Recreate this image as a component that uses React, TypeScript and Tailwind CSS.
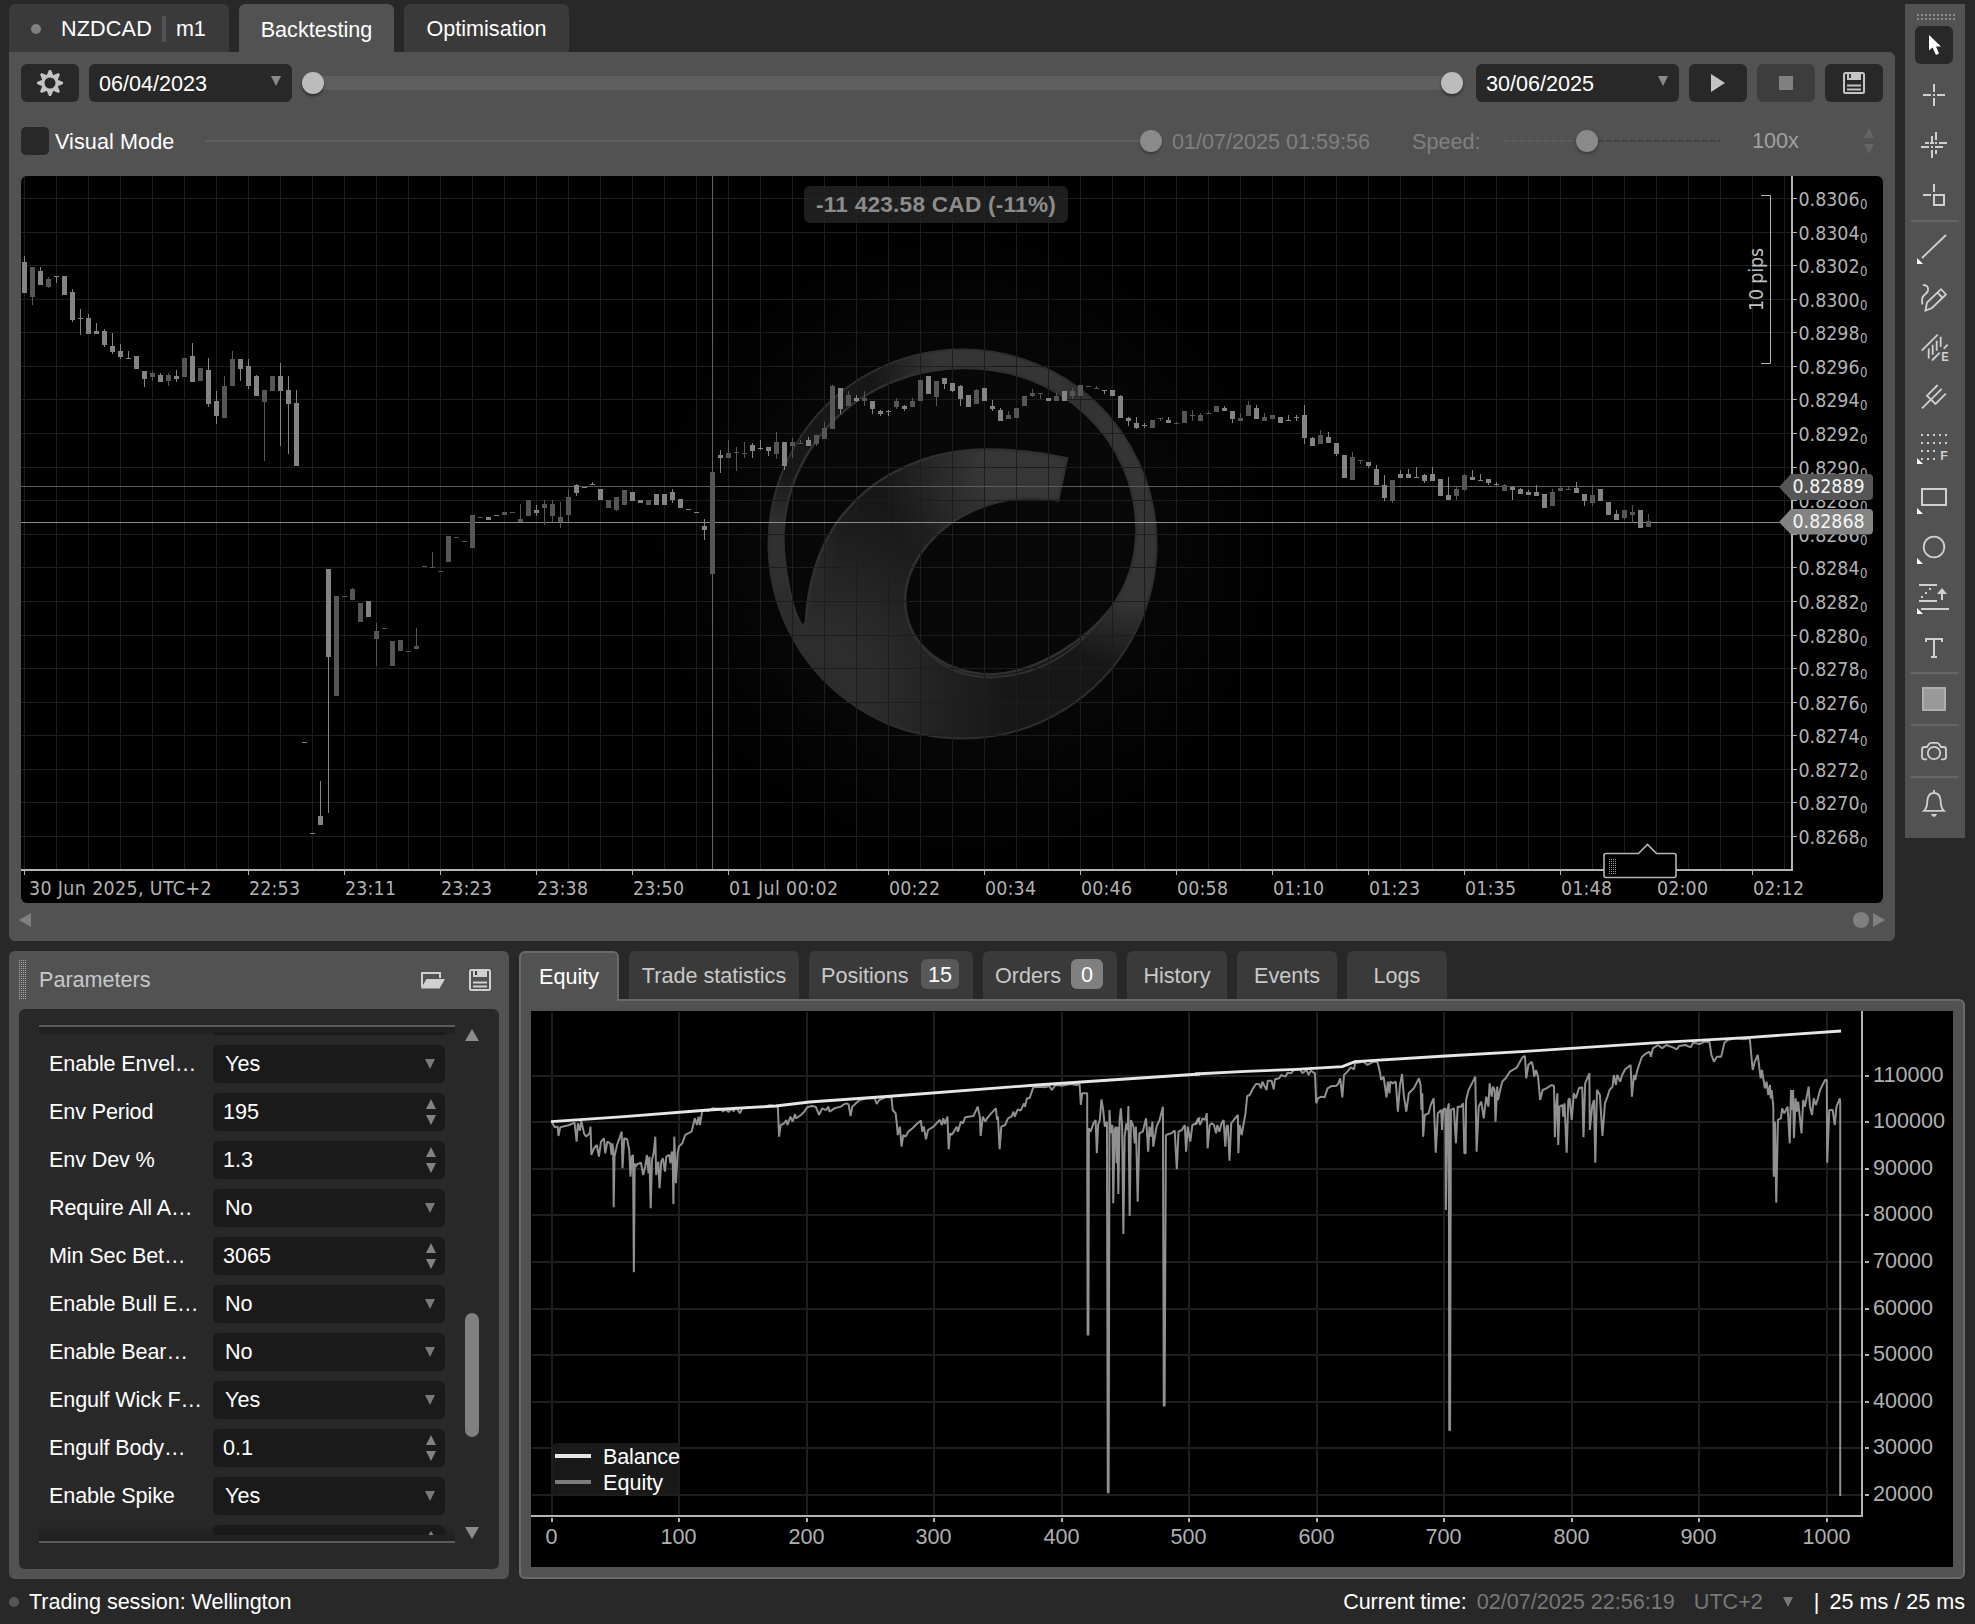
import React from "react";

/* Candles: [index, tone, high, low, bodyTop, bodyBottom]; tone 1 = falling (light), 0 = rising (dark) */
type Candle = [number, number, number, number, number, number];

const CANDLES: Candle[] = [
  [0, 1, 256, 293, 262, 293], [1, 0, 267, 305, 267, 297], [2, 1, 267, 285, 271, 285], [3, 0, 277, 288, 279, 287],
  [4, 1, 276, 283, 276, 277], [5, 1, 276, 295, 276, 295], [6, 1, 289, 322, 292, 320], [7, 1, 309, 335, 318, 319],
  [8, 1, 314, 334, 318, 334], [9, 1, 323, 334, 331, 334], [10, 1, 329, 347, 331, 345], [11, 1, 333, 354, 346, 352],
  [12, 1, 344, 359, 351, 357], [13, 1, 351, 359, 358, 359], [14, 1, 356, 369, 356, 369], [15, 1, 371, 387, 371, 379],
  [16, 0, 371, 381, 373, 377], [17, 1, 373, 382, 375, 382], [18, 0, 373, 386, 375, 381], [19, 1, 370, 382, 376, 379],
  [20, 0, 358, 377, 358, 377], [21, 1, 343, 382, 356, 382], [22, 0, 368, 381, 368, 381], [23, 1, 358, 407, 370, 404],
  [24, 1, 391, 424, 401, 416], [25, 0, 376, 418, 386, 418], [26, 0, 351, 386, 359, 386], [27, 1, 359, 381, 359, 369],
  [28, 1, 359, 389, 366, 386], [29, 1, 375, 396, 376, 396], [30, 0, 390, 461, 390, 402], [31, 0, 376, 391, 376, 391],
  [32, 1, 363, 446, 376, 391], [33, 1, 376, 454, 390, 404], [34, 1, 390, 466, 403, 466], [35, 1, 742, 743, 742, 743],
  [36, 1, 833, 834, 833, 834], [37, 1, 781, 825, 816, 825], [38, 1, 569, 813, 569, 657], [39, 0, 596, 696, 596, 696],
  [40, 0, 596, 597, 596, 597], [41, 0, 588, 600, 589, 600], [42, 0, 603, 622, 603, 622], [43, 1, 601, 617, 601, 617],
  [44, 0, 623, 666, 631, 639], [45, 0, 628, 629, 628, 629], [46, 0, 641, 666, 641, 666], [47, 0, 640, 651, 640, 651],
  [48, 0, 651, 652, 651, 652], [49, 0, 628, 649, 646, 649], [50, 0, 566, 567, 566, 567], [51, 0, 552, 568, 567, 568],
  [52, 0, 571, 572, 571, 572], [53, 0, 536, 562, 536, 562], [54, 0, 537, 538, 537, 538], [55, 0, 541, 542, 541, 542],
  [56, 0, 515, 548, 515, 548], [57, 0, 517, 518, 517, 518], [58, 1, 517, 520, 517, 520], [59, 1, 515, 516, 515, 516],
  [60, 0, 512, 515, 512, 515], [61, 0, 512, 513, 512, 513], [62, 0, 504, 522, 519, 522], [63, 0, 500, 516, 500, 516],
  [64, 1, 505, 516, 510, 513], [65, 0, 500, 525, 504, 508], [66, 0, 500, 522, 504, 516], [67, 0, 502, 528, 517, 522],
  [68, 0, 489, 522, 497, 515], [69, 1, 484, 496, 485, 493], [70, 1, 487, 488, 487, 488], [71, 1, 482, 485, 484, 485],
  [72, 1, 489, 500, 489, 500], [73, 0, 500, 508, 500, 508], [74, 0, 497, 511, 497, 510], [75, 0, 490, 505, 490, 505],
  [76, 1, 492, 501, 492, 501], [77, 1, 500, 503, 500, 503], [78, 0, 500, 505, 500, 505], [79, 1, 494, 505, 494, 505],
  [80, 1, 494, 505, 494, 505], [81, 1, 489, 503, 492, 500], [82, 1, 499, 508, 499, 508], [83, 1, 509, 510, 509, 510],
  [84, 1, 512, 513, 512, 513], [85, 1, 519, 540, 526, 530], [86, 0, 472, 574, 472, 574], [87, 1, 450, 473, 455, 458],
  [88, 0, 440, 458, 453, 458], [89, 0, 447, 471, 452, 453], [90, 0, 442, 458, 453, 454], [91, 1, 443, 458, 445, 451],
  [92, 1, 440, 450, 448, 449], [93, 1, 447, 456, 447, 451], [94, 0, 432, 459, 442, 454], [95, 1, 442, 470, 442, 466],
  [96, 0, 438, 458, 442, 446], [97, 0, 440, 444, 443, 444], [98, 1, 437, 446, 440, 446], [99, 0, 435, 446, 435, 444],
  [100, 0, 422, 439, 428, 439], [101, 0, 385, 429, 386, 429], [102, 1, 388, 414, 388, 409], [103, 0, 391, 406, 395, 406],
  [104, 1, 395, 402, 398, 401], [105, 0, 391, 406, 398, 401], [106, 1, 401, 414, 401, 409], [107, 1, 410, 416, 411, 414],
  [108, 1, 410, 416, 411, 412], [109, 0, 398, 409, 401, 407], [110, 1, 405, 411, 406, 409], [111, 0, 398, 407, 401, 407],
  [112, 0, 380, 401, 380, 401], [113, 1, 376, 394, 376, 394], [114, 0, 381, 406, 381, 397], [115, 1, 378, 389, 378, 384],
  [116, 1, 383, 392, 383, 391], [117, 1, 385, 406, 386, 399], [118, 1, 395, 407, 395, 407], [119, 0, 389, 404, 390, 404],
  [120, 1, 388, 401, 388, 401], [121, 1, 400, 411, 406, 409], [122, 1, 408, 421, 410, 421], [123, 0, 411, 419, 415, 419],
  [124, 0, 408, 418, 408, 418], [125, 0, 396, 406, 396, 406], [126, 0, 389, 397, 393, 396], [127, 0, 393, 399, 393, 394],
  [128, 1, 398, 401, 398, 401], [129, 0, 393, 401, 396, 401], [130, 1, 391, 401, 391, 401], [131, 0, 388, 399, 391, 396],
  [132, 0, 385, 396, 385, 396], [133, 0, 386, 387, 386, 387], [134, 0, 386, 389, 388, 389], [135, 1, 390, 394, 390, 391],
  [136, 1, 390, 396, 390, 396], [137, 1, 395, 418, 396, 418], [138, 1, 417, 426, 418, 421], [139, 1, 417, 429, 423, 428],
  [140, 1, 423, 428, 425, 426], [141, 0, 420, 428, 420, 428], [142, 0, 418, 421, 418, 419], [143, 1, 417, 423, 420, 423],
  [144, 0, 422, 424, 423, 424], [145, 0, 411, 423, 411, 423], [146, 0, 410, 421, 415, 416], [147, 0, 413, 421, 415, 421],
  [148, 0, 411, 414, 413, 414], [149, 0, 406, 412, 406, 412], [150, 1, 406, 411, 408, 411], [151, 1, 411, 423, 411, 419],
  [152, 0, 413, 421, 418, 421], [153, 0, 401, 416, 405, 416], [154, 1, 405, 419, 408, 419], [155, 0, 413, 421, 417, 421],
  [156, 0, 415, 419, 415, 419], [157, 1, 417, 423, 417, 423], [158, 1, 415, 421, 420, 421], [159, 1, 415, 421, 417, 418],
  [160, 1, 405, 444, 415, 438], [161, 1, 437, 446, 438, 446], [162, 0, 430, 444, 435, 444], [163, 1, 432, 443, 437, 443],
  [164, 1, 443, 456, 443, 454], [165, 1, 455, 478, 455, 478], [166, 0, 452, 480, 457, 480], [167, 0, 460, 464, 460, 461],
  [168, 1, 462, 468, 462, 466], [169, 1, 465, 485, 469, 485], [170, 1, 475, 501, 485, 498], [171, 0, 480, 503, 480, 501],
  [172, 1, 470, 478, 474, 478], [173, 1, 469, 478, 474, 478], [174, 1, 467, 478, 477, 478], [175, 1, 474, 483, 475, 481],
  [176, 1, 467, 481, 474, 481], [177, 1, 479, 496, 479, 496], [178, 1, 477, 500, 495, 500], [179, 0, 487, 500, 489, 496],
  [180, 0, 474, 491, 475, 490], [181, 1, 470, 480, 477, 480], [182, 1, 474, 481, 480, 481], [183, 1, 479, 485, 479, 483],
  [184, 1, 482, 486, 484, 485], [185, 0, 484, 491, 485, 491], [186, 1, 486, 500, 487, 490], [187, 1, 488, 494, 489, 494],
  [188, 1, 490, 495, 492, 495], [189, 1, 485, 496, 492, 496], [190, 1, 494, 508, 494, 508], [191, 0, 489, 506, 492, 506],
  [192, 0, 487, 491, 488, 491], [193, 0, 486, 490, 489, 490], [194, 1, 482, 493, 488, 493], [195, 1, 494, 506, 494, 501],
  [196, 0, 485, 506, 495, 503], [197, 1, 489, 501, 489, 501], [198, 1, 502, 515, 502, 515], [199, 1, 510, 520, 514, 520],
  [200, 0, 510, 520, 510, 518], [201, 0, 505, 522, 512, 515], [202, 1, 510, 528, 510, 528], [203, 0, 514, 527, 521, 527],
];

const PRICES = [
  "0.8306", "0.8304", "0.8302", "0.8300", "0.8298", "0.8296", "0.8294", "0.8292", "0.8290", "0.8288",
  "0.8286", "0.8284", "0.8282", "0.8280", "0.8278", "0.8276", "0.8274", "0.8272", "0.8270", "0.8268",
];

const TIMES: [number, string, number, number][] = [
  [24, "30 Jun 2025, UTC+2", 5, 182.5], [248, "22:53", 1, 51], [344, "23:11", 1, 51], [440, "23:23", 1, 51],
  [536, "23:38", 1, 51], [632, "23:50", 1, 51], [728, "01 Jul 00:02", 1, 109], [888, "00:22", 1, 51],
  [984, "00:34", 1, 51], [1080, "00:46", 1, 51], [1176, "00:58", 1, 51], [1272, "01:10", 1, 51],
  [1368, "01:23", 1, 51], [1464, "01:35", 1, 51], [1560, "01:48", 1, 51], [1656, "02:00", 1, 51], [1752, "02:12", 1, 51],
];

const priceY = (k: number) => Math.round(198 + (k * 638) / 19);
const AXIS_FONT = "'DejaVu Sans Condensed', 'Noto Sans', sans-serif";

const HOLE =
  "M801 624 C792 611 783 566 783.4 535 C786 445 862 368 965 368 C1062 368 1136 440 1136.5 530 C1136 562 1126 588 1111 608 C1088 638 1040 672 992 674.5 C938 673 905 640 905 600 C906 562 934 535 953 521.6 C985 501 1020 494 1058 500.6 L1067 458.5 C1040 452 1012 449.5 985 449.5 C947 450 918 459 888 475.5 C866 488 851 503 836 523.6 C817 552 808 585 806 620 C805.5 625 803 627 801 624 Z";
const DISC = "M962.5 349.5 A194 194.5 0 1 0 962.6 349.5 Z";

function Watermark() {
  return (
    <g>
      <defs>
        <radialGradient id="halo" gradientUnits="userSpaceOnUse" cx="962" cy="545" r="330">
          <stop offset="0.55" stopColor="#070707" />
          <stop offset="1" stopColor="#000000" />
        </radialGradient>
        <radialGradient id="swooshTop" gradientUnits="userSpaceOnUse" cx="1045" cy="460" r="165">
          <stop offset="0.4" stopColor="#363636" />
          <stop offset="1" stopColor="#363636" stopOpacity="0" />
        </radialGradient>
        <radialGradient id="swooshLow" gradientUnits="userSpaceOnUse" cx="810" cy="690" r="200">
          <stop offset="0.3" stopColor="#2d2d2d" />
          <stop offset="1" stopColor="#2d2d2d" stopOpacity="0" />
        </radialGradient>
        <radialGradient id="ringRight" gradientUnits="userSpaceOnUse" cx="1150" cy="500" r="170">
          <stop offset="0.6" stopColor="#353535" />
          <stop offset="1" stopColor="#353535" stopOpacity="0" />
        </radialGradient>
        <radialGradient id="ringTop" gradientUnits="userSpaceOnUse" cx="1000" cy="350" r="130">
          <stop offset="0.5" stopColor="#353535" />
          <stop offset="1" stopColor="#353535" stopOpacity="0" />
        </radialGradient>
        <radialGradient id="ringLeft" gradientUnits="userSpaceOnUse" cx="760" cy="550" r="80">
          <stop offset="0.4" stopColor="#303030" />
          <stop offset="1" stopColor="#303030" stopOpacity="0" />
        </radialGradient>
        <clipPath id="shape">
          <path d={DISC + " " + HOLE} clipRule="evenodd" />
        </clipPath>
      </defs>
      <ellipse cx="962" cy="545" rx="330" ry="330" fill="url(#halo)" />
      <path d={HOLE} fill="#080808" />
      <g clipPath="url(#shape)">
        <rect x="760" y="340" width="410" height="410" fill="#171717" />
        <rect x="760" y="340" width="410" height="410" fill="url(#swooshLow)" />
        <rect x="760" y="340" width="410" height="410" fill="url(#ringLeft)" />
        <rect x="760" y="340" width="410" height="410" fill="url(#ringRight)" />
        <rect x="760" y="340" width="410" height="110" fill="url(#ringTop)" />
        <path d="M860 430 H1075 V560 H860 Z" fill="url(#swooshTop)" />
      </g>
      <path d={DISC} fill="none" stroke="#2e2e2e" strokeWidth="2" />
      <path d={HOLE} fill="none" stroke="#303030" strokeWidth="2.5" />
      <path d="M905 600 C906 640 938 677 992 677.5 C1040 675 1075 655 1111 608" fill="none" stroke="#303030" strokeWidth="2" />
    </g>
  );
}

function PriceChart() {
  const cols = Array.from({ length: 56 }, (_, k) => 24 + 32 * k);
  return (
    <svg className="block" width="1862" height="727" viewBox="21 176 1862 727" fontFamily={AXIS_FONT} fontSize="19.4">
      <rect x="21" y="176" width="1862" height="727" fill="#000" />
      <Watermark />
      <g fill="#1d1d1d">
        {cols.map((x) => (
          <rect key={x} x={x} y="176" width="1" height="694" />
        ))}
        {PRICES.map((p, k) => (
          <rect key={p} x="21" y={priceY(k)} width="1771" height="1" />
        ))}
      </g>
      <rect x="712" y="176" width="1" height="694" fill="#626262" />
      <rect x="21" y="486" width="1771" height="1" fill="#5c5c5c" />
      <rect x="21" y="522" width="1771" height="1" fill="#8a8a8a" />
      {CANDLES.map(([i, tone, hi, lo, top, bottom]) => (
        <g key={i} fill={tone ? "#848484" : "#565656"}>
          <rect x={24 + i * 8} y={hi} width="1" height={lo - hi} />
          <rect x={22 + i * 8} y={top} width="5" height={bottom - top} />
        </g>
      ))}
      <path d="M1761 195.5 H1770.5 V363.5 H1761" fill="none" stroke="#b4b4b4" />
      <text transform="translate(1762.5 311) rotate(-90)" fill="#c0c0c0" textLength="63">10 pips</text>
      <rect x="1791" y="176" width="2" height="695" fill="#b4b4b4" />
      <rect x="21" y="869" width="1772" height="2" fill="#b4b4b4" />
      {PRICES.map((p, k) => (
        <g key={p} fill="#b2b2b2">
          <rect x="1793" y={priceY(k)} width="4" height="1" />
          <text x="1798.5" y={priceY(k) + 8}>{p}</text>
          <text x="1860" y={priceY(k) + 10.5} fontSize="13.5" textLength="7.5" lengthAdjust="spacingAndGlyphs">0</text>
        </g>
      ))}
      {TIMES.map(([x, label, dx, w]) => (
        <g key={label} fill="#b2b2b2">
          <rect x={x} y="871" width="1" height="4" />
          <text x={x + dx} y="894.5" textLength={w}>{label}</text>
        </g>
      ))}
      <path d="M1779 487 L1791 474 H1869 Q1873 474 1873 478 V496 Q1873 500 1869 500 H1791 Z" fill="#565656" />
      <path d="M1779 522 L1791 509 H1869 Q1873 509 1873 513 V530 Q1873 534.5 1869 534.5 H1791 Z" fill="#838383" />
      <text x="1792.5" y="493" fill="#f4f4f4">0.82889</text>
      <text x="1792.5" y="528" fill="#f4f4f4">0.82868</text>
      <path d="M1606 853.5 H1638.5 L1647.5 844.5 L1656.5 853.5 H1674 Q1676 853.5 1676 855.5 V875.5 Q1676 877.5 1674 877.5 H1606 Q1604 877.5 1604 875.5 V855.5 Q1604 853.5 1606 853.5 Z" fill="#000" stroke="#b4b4b4" strokeWidth="1.6" />
      <g stroke="#a0a0a0" strokeDasharray="1 1">
        <path d="M1609.5 859 V874 M1611.5 859 V874 M1613.5 859 V874 M1615.5 859 V874" />
      </g>
    </svg>
  );
}

/* Equity samples, left and right half of the run, in thirds of a pixel vertically */
const EQUITY_A =
  "28,335 35,352 42,350 44,378 48,352 70,345 82,338 87,395 90,340 95,362 98,332 105,372 110,380 118,370 120,350 122,435 128,415 135,405 140,440 145,395 152,385 155,430 160,395 167,400 170,435 172,400 174,420 175,592 177,440 183,405 190,380 194,365 196,475 200,385 207,388 212,420 215,500 218,440 221,435 223,787 225,460 227,470 232,462 240,458 245,495 250,470 254,435 258,490 260,440 263,595 266,450 270,430 274,380 276,495 281,455 284,535 288,455 292,445 297,485 300,440 307,435 310,460 313,425 315,430 317,582 319,380 323,520 327,430 330,410 338,400 345,375 360,365 368,325 373,345 377,320 380,345 385,305 392,300 400,303 410,295 430,297 435,305 440,298 448,306 455,296 460,304 466,292 470,300 475,310 480,295 500,291 530,292 545,286 560,288 565,290 568,380 572,345 580,340 585,330 588,345 595,320 600,335 606,312 608,325 620,315 628,305 635,292 645,288 655,290 660,305 663,315 670,295 680,300 685,290 688,305 700,295 715,290 722,283 728,280 733,283 738,318 742,290 752,278 760,270 775,265 795,264 800,282 806,270 820,262 835,262 838,300 845,310 848,345 850,375 855,350 859,410 863,375 868,380 875,365 885,355 895,342 905,332 908,365 912,350 917,388 922,360 935,350 942,340 950,330 955,345 958,325 962,342 968,320 971,418 974,370 978,375 985,362 990,350 993,365 1000,335 1005,340 1010,322 1030,318 1040,290 1045,320 1047,378 1052,320 1058,335 1062,325 1072,310 1083,295 1086,330 1088,320 1092,418 1096,350 1105,345 1112,325 1120,320 1125,305 1128,320 1135,298 1142,302 1150,280 1152,290 1157,265 1163,265 1172,232 1190,230 1200,232 1210,228 1216,240 1225,225 1240,227 1260,222 1275,225 1282,222 1285,285 1288,250 1300,250 1301,974 1303,974 1304,355 1308,365 1315,340 1320,330 1323,430 1326,345 1330,330 1334,268 1338,300 1342,350 1347,335 1349,1448 1351,1448 1353,300 1356,370 1360,345 1362,580 1365,360 1368,350 1370,460 1372,350 1374,552 1377,330 1380,295 1383,350 1386,672 1389,380 1393,340 1396,360 1398,288 1401,618 1404,330 1410,350 1413,400 1416,350 1420,575 1424,370 1432,365 1440,325 1445,425 1448,350 1452,380 1455,335 1457,410 1465,350 1472,330 1480,290 1482,1187 1484,1187 1487,375 1500,370 1508,362 1513,478 1517,365 1525,360 1532,345 1535,425 1539,350 1545,395 1550,345 1560,340 1568,322";
const EQUITY_B =
  "0,345 8,325 12,345 18,325 24,330 28,310 30,415 35,345 40,340 45,345 50,370 53,345 58,365 63,340 68,330 70,370 72,410 75,350 78,345 82,452 86,340 92,330 102,315 103,430 106,345 111,375 115,345 120,310 124,258 130,255 138,235 145,222 152,222 157,235 160,215 170,240 173,212 182,212 187,238 190,208 200,205 205,195 215,200 220,188 228,190 235,180 250,178 255,190 265,180 270,195 275,182 285,190 288,280 292,265 300,260 308,262 315,235 325,228 335,228 340,222 345,205 350,262 354,195 362,185 370,172 378,178 380,160 400,155 410,165 420,158 428,155 434,158 440,190 442,210 448,200 455,262 458,215 462,250 464,215 470,220 477,215 482,305 487,225 492,192 496,255 502,305 508,250 520,235 532,205 536,225 538,300 540,250 542,380 546,315 555,310 560,285 567,265 572,428 577,310 585,300 587,360 590,298 595,295 596,600 600,300 603,280 604,1261 606,1261 608,300 615,295 620,400 624,290 632,290 637,280 640,430 643,430 644,270 650,240 658,220 666,200 669,425 674,290 680,275 686,325 692,260 697,290 700,220 705,260 708,230 712,240 714,335 718,230 720,270 725,240 730,215 738,205 748,185 765,172 778,142 784,138 787,205 792,165 800,155 803,170 806,200 810,180 815,200 820,270 826,240 835,235 847,225 853,228 855,382 858,290 861,250 863,405 866,290 873,285 875,320 878,280 883,428 887,270 890,265 895,330 900,250 905,265 912,235 920,232 923,382 927,220 937,190 938,360 944,285 948,270 951,458 955,240 962,255 968,378 974,280 980,260 985,240 992,230 995,195 1000,225 1003,195 1010,215 1015,195 1022,178 1030,170 1035,165 1038,260 1043,195 1046,210 1050,185 1055,165 1062,140 1070,132 1080,125 1083,140 1088,115 1100,105 1110,115 1120,105 1135,112 1145,118 1150,108 1165,105 1178,112 1183,98 1200,102 1210,95 1222,95 1227,135 1233,155 1240,140 1250,140 1258,98 1265,90 1285,85 1305,88 1318,85 1325,180 1330,155 1337,135 1342,185 1344,205 1347,180 1352,220 1354,235 1358,215 1362,255 1366,225 1368,265 1370,240 1374,290 1375,500 1378,335 1381,578 1385,330 1392,325 1395,295 1400,310 1408,290 1413,400 1416,240 1419,300 1421,240 1423,385 1427,265 1430,305 1433,275 1436,310 1441,370 1445,270 1449,290 1452,270 1458,230 1461,290 1466,315 1470,265 1475,285 1480,265 1485,240 1497,210 1501,210 1502,458 1507,300 1515,300 1520,345 1524,290 1532,265 1533,280 1533,1458";
const BALANCE_A = "26,335 200,320 400,300 560,288 640,276 840,258 1180,225 1568,192";
const BALANCE_B = "0,192 120,184 240,178 350,170 380,155 595,138 785,124 1100,98 1320,82 1535,63";

function EquityChart() {
  const xs = Array.from({ length: 11 }, (_, k) => Math.round(551.5 + 127.5 * k));
  const ys = Array.from({ length: 10 }, (_, k) => Math.round(1074.6 + 46.6 * k));
  return (
    <svg className="block" width="1422" height="556" viewBox="531 1011 1422 556" fontFamily="'Liberation Sans', Arial, sans-serif" fontSize="21.6">
      <rect x="531" y="1011" width="1422" height="556" fill="#000" />
      <g fill="#1e1e1e">
        {xs.map((x) => (
          <rect key={x} x={x - 1} y="1012" width="2" height="504" />
        ))}
        {ys.map((y) => (
          <rect key={y} x="532" y={y} width="1330" height="2" />
        ))}
      </g>
      <g fill="none" stroke="#9c9c9c" strokeOpacity="0.92" strokeWidth="2" strokeLinejoin="bevel">
        <polyline transform="translate(540 1010) scale(0.4209 0.3333)" points={EQUITY_A} vectorEffect="non-scaling-stroke" />
        <polyline transform="translate(1195 1010) scale(0.4209 0.3333)" points={EQUITY_B} vectorEffect="non-scaling-stroke" />
      </g>
      <g fill="none" stroke="#e6e6e6" strokeWidth="2.8">
        <polyline transform="translate(540 1010) scale(0.4209 0.3333)" points={BALANCE_A} vectorEffect="non-scaling-stroke" />
        <polyline transform="translate(1195 1010) scale(0.4209 0.3333)" points={BALANCE_B} vectorEffect="non-scaling-stroke" />
      </g>
      <rect x="553" y="1443" width="127" height="52" rx="3" fill="#1c1c1c" fillOpacity="0.9" />
      <rect x="555" y="1454" width="36" height="4" fill="#e6e6e6" />
      <rect x="555" y="1480" width="36" height="4" fill="#7c7c7c" />
      <text x="603" y="1464" fill="#fff" textLength="77">Balance</text>
      <text x="603" y="1490" fill="#fff">Equity</text>
      <rect x="531" y="1515" width="1332" height="2" fill="#b4b4b4" />
      <rect x="1861" y="1011" width="2" height="506" fill="#b4b4b4" />
      {xs.map((x, k) => (
        <g key={x} fill="#b0b0b0">
          <rect x={x - 1} y="1518" width="2" height="4" />
          <text x={x - 0.5} y="1544" textAnchor="middle">{k * 100}</text>
        </g>
      ))}
      {ys.map((y, k) => (
        <g key={y} fill="#b0b0b0">
          <rect x="1865" y={y} width="4" height="2" />
          <text x="1873" y={y + 6.5}>{110000 - k * 10000}</text>
        </g>
      ))}
    </svg>
  );
}

function Down({ className }: { className?: string }) {
  return (
    <svg className={className} width="10" height="10" viewBox="0 0 10 10">
      <path d="M0 0 H10 L5 10 Z" fill="currentColor" />
    </svg>
  );
}

function Stepper({ className }: { className: string }) {
  return (
    <svg className={className} width="10" height="26" viewBox="0 0 10 26">
      <path d="M0 10 H10 L5 0 Z M0 16 H10 L5 26 Z" fill="currentColor" />
    </svg>
  );
}

function SaveIcon() {
  return (
    <svg width="22" height="22" viewBox="0 0 22 22" fill="none" stroke="currentColor" strokeWidth="2">
      <rect x="1" y="1" width="20" height="20" rx="1.5" />
      <path d="M4 1 H18 V8 H4 Z" fill="currentColor" stroke="none" />
      <path d="M7 2 V6" stroke="#3a3a3a" strokeWidth="2" />
      <path d="M4 13.5 H18 M4 17.5 H18" />
    </svg>
  );
}

function ToolCell({ children, corner }: { children: React.ReactNode; corner?: boolean }) {
  return (
    <svg className="block shrink-0" width="60" height="50" viewBox="0 0 60 50" fill="none" stroke="#d0d0d0" strokeWidth="2">
      {children}
      {corner && <path d="M12 36 V42 H18 Z" fill="#fff" stroke="none" />}
    </svg>
  );
}

const Divider = () => <div className="mx-[6px] h-[2px] shrink-0 bg-[#666666]" />;

function Toolbar() {
  return (
    <div className="flex h-[834px] w-[60px] flex-col bg-[#525252]">
      <svg className="ml-[12px] mt-[10px] block shrink-0" width="38" height="6" viewBox="0 0 38 6" stroke="#8c8c8c" strokeWidth="2" strokeDasharray="2 2">
        <path d="M0 1 H38 M0 5 H38" />
      </svg>
      <div className="mb-[6px] ml-[10px] mt-[6px] flex size-[38px] shrink-0 items-center justify-center rounded-[6px] bg-[#282828]">
        <svg width="12" height="20" viewBox="0 0 12 20" className="ml-[2px]">
          <path d="M0 0 V15.5 L3.6 12.5 L7 20 L10 18.6 L7 11.6 H12 Z" fill="#fff" />
        </svg>
      </div>
      <ToolCell>
        <path d="M29 14 V22 M29 24 V26 M29 28 V36 M18 25 H26 M32 25 H40" />
      </ToolCell>
      <ToolCell>
        <path d="M20 23 H24 M25 23 H29 M30 23 H32 M34 23 H42 M16 27 H24 M26 27 H28 M30 27 H38 M31 12 V20 M31 26 V28 M31 30 V34 M27 16 V24 M27 30 V38" />
      </ToolCell>
      <ToolCell>
        <path d="M29 14 V22 M18 25 H26" />
        <rect x="29" y="25" width="10" height="10" />
      </ToolCell>
      <Divider />
      <ToolCell corner>
        <path d="M41 13 L17 36" strokeWidth="1.8" />
      </ToolCell>
      <ToolCell>
        <path d="M18 13 C22 13 23.5 15 23 18.5 C22.5 22 18 22 17.2 26.5 C16.9 28.5 17 30 17.4 32.5" strokeWidth="1.8" />
        <path d="M20.5 38.5 L22 30.5 L36 17.2 L41 22.5 L27 36 Z M32.5 20.7 L37.7 26" strokeWidth="1.8" />
      </ToolCell>
      <ToolCell>
        <path d="M16.7 28.7 L32.7 12.7 M23.7 26.5 V36.5 M27.7 22.7 V32.7 M31.7 18.7 V28.7 M35.7 14.7 V24.7 M27 38.5 L34.7 30.7 M38.7 26.7 L42.7 22.7" strokeWidth="1.8" />
        <text x="36.3" y="38.7" fontSize="13.5" fontWeight="700" fontFamily="'Liberation Sans', Arial, sans-serif" fill="#d0d0d0" stroke="none" textLength="7.5" lengthAdjust="spacingAndGlyphs">E</text>
      </ToolCell>
      <ToolCell>
        <path d="M17 36.3 L36.7 16.8 M32.7 13 L22 23.7 L30.5 32 L40.8 21.6" strokeWidth="1.8" />
      </ToolCell>
      <ToolCell corner>
        <path d="M16 13 H42 M16 21 H42" strokeDasharray="2 4" />
        <path d="M16 29 H30 M16 37 H30" strokeDasharray="2 4" />
        <text x="35.2" y="38" fontSize="13.5" fontWeight="700" fontFamily="'Liberation Sans', Arial, sans-serif" fill="#d0d0d0" stroke="none" textLength="7.5" lengthAdjust="spacingAndGlyphs">F</text>
      </ToolCell>
      <ToolCell corner>
        <rect x="17" y="17" width="24" height="16" />
      </ToolCell>
      <ToolCell corner>
        <circle cx="29" cy="25" r="10.3" strokeWidth="1.8" />
      </ToolCell>
      <ToolCell corner>
        <path d="M14 13 H32 M14 29 H32 M16 37 H44 M37 28 V21" />
        <path d="M16 24 h2 v2 h-2 z M20 20 h2 v2 h-2 z M24 16 h2 v2 h-2 z M32 22 L37 16 L42 22 Z" fill="#d0d0d0" stroke="none" />
      </ToolCell>
      <ToolCell>
        <path d="M21 20 V17 H37 V20 M29 17 V35 M26 35 H32" />
      </ToolCell>
      <Divider />
      <ToolCell>
        <rect x="18" y="14" width="22" height="22" fill="#999999" stroke="#aeaeae" />
      </ToolCell>
      <Divider />
      <ToolCell>
        <circle cx="29" cy="27" r="6.2" strokeWidth="1.8" />
        <path d="M22 33.3 H19.5 Q17 33.3 17 30.8 V23.5 Q17 21 19.5 21 H22 L24 18 Q24.8 16.8 26 16.8 H32 Q33.2 16.8 34 18 L36 21 H38.5 Q41 21 41 23.5 V30.8 Q41 33.3 38.5 33.3 H36" strokeWidth="1.8" />
      </ToolCell>
      <Divider />
      <ToolCell>
        <path d="M29 12 V15 M19 32.8 H39 Q36.5 30.5 36 27 L35.5 21.5 Q34.5 15 29 15 Q23.5 15 22.5 21.5 L22 27 Q21.5 30.5 19 32.8 Z" strokeWidth="1.8" />
        <path d="M26 36 H32 Q31 39 29 39 Q27 39 26 36 Z" fill="#d0d0d0" stroke="none" />
      </ToolCell>
    </div>
  );
}

const PARAMS: { label: string; value: string; numeric?: boolean }[] = [
  { label: "Enable Envel…", value: "Yes" },
  { label: "Env Period", value: "195", numeric: true },
  { label: "Env Dev %", value: "1.3", numeric: true },
  { label: "Require All A…", value: "No" },
  { label: "Min Sec Bet…", value: "3065", numeric: true },
  { label: "Enable Bull E…", value: "No" },
  { label: "Enable Bear…", value: "No" },
  { label: "Engulf Wick F…", value: "Yes" },
  { label: "Engulf Body…", value: "0.1", numeric: true },
  { label: "Enable Spike", value: "Yes" },
];

function Parameters() {
  return (
    <div className="flex h-[628px] w-[500px] flex-col rounded-[6px] bg-[#525252] px-[10px] pb-[10px]">
      <div className="flex h-[58px] items-center">
        <svg width="7" height="40" viewBox="0 0 7 40" stroke="#a8a8a8" strokeDasharray="1 1">
          <path d="M0.5 0 V40 M2.5 0 V40 M4.5 0 V40 M6.5 0 V40" />
        </svg>
        <span className="ml-[13px] text-[#c8c8c8]">Parameters</span>
        <svg className="ml-auto text-[#d0d0d0]" width="24" height="17" viewBox="0 0 24 17">
          <path d="M1 15 V1 H19 V6" fill="none" stroke="currentColor" strokeWidth="2" />
          <path d="M0 16.5 L5.5 7 H24 L18.5 16.5 Z" fill="currentColor" />
        </svg>
        <div className="ml-[24px] mr-[8px] text-[#d0d0d0]">
          <SaveIcon />
        </div>
      </div>
      <div className="flex h-[560px] rounded-[6px] bg-[#282828] pl-[20px] pt-[16px]">
        <div className="flex h-[518px] w-[416px] flex-col border-y-2 border-[#5a5a5a]">
          <div className="h-[8px] shrink-0 bg-gradient-to-b from-[#1f1f1f] to-[#242424] pl-[174px] pt-[5px]">
            <div className="h-[3px] w-[232px] rounded-b-[6px] bg-[#1a1a1a]" />
          </div>
          <div className="flex flex-col gap-[10px] pl-[10px] pt-[10px]">
            {PARAMS.map((p) => (
              <div key={p.label} className="flex h-[38px] items-center">
                <span className="w-[164px] whitespace-nowrap tracking-[-0.13px] text-white">{p.label}</span>
                <div className="flex h-[38px] w-[232px] items-center rounded-[6px] bg-[#1a1a1a] text-white">
                  <span className={p.numeric ? "ml-[10px]" : "ml-[12px]"}>{p.value}</span>
                  {p.numeric ? (
                    <Stepper className="ml-auto mr-[9px] text-[#828282]" />
                  ) : (
                    <Down className="ml-auto mr-[10px] text-[#787878]" />
                  )}
                </div>
              </div>
            ))}
          </div>
          <div className="mt-auto flex h-[16px] flex-col justify-start bg-gradient-to-b from-[#282828] to-[#1f1f1f] pl-[174px]">
            <div className="flex h-[10px] w-[232px] justify-end rounded-t-[6px] bg-[#1a1a1a] pr-[9px] pt-[6px] text-[#828282]">
              <svg width="10" height="4" viewBox="0 0 10 4">
                <path d="M5 0 L7.5 4 H2.5 Z" fill="currentColor" />
              </svg>
            </div>
          </div>
        </div>
        <div className="ml-[10px] flex h-[514px] w-[14px] flex-col items-center text-[#8c8c8c]">
          <svg className="mt-[4px] shrink-0" width="14" height="12" viewBox="0 0 14 12">
            <path d="M7 0 L14 12 H0 Z" fill="currentColor" />
          </svg>
          <div className="mt-[272px] h-[124px] w-[14px] shrink-0 rounded-full bg-[#808080]" />
          <svg className="mt-auto shrink-0" width="14" height="12" viewBox="0 0 14 12">
            <path d="M7 12 L14 0 H0 Z" fill="currentColor" />
          </svg>
        </div>
      </div>
    </div>
  );
}

const TABS: { label: string; width: string; badge?: string; tone?: string }[] = [
  { label: "Trade statistics", width: "w-[170px] justify-center" },
  { label: "Positions", width: "w-[164px] pl-[12px]", badge: "15", tone: "mr-[14px] w-[38px] bg-[#595959]" },
  { label: "Orders", width: "w-[134px] pl-[12px]", badge: "0", tone: "mr-[14px] w-[32px] bg-[#808080]" },
  { label: "History", width: "w-[100px] justify-center" },
  { label: "Events", width: "w-[100px] justify-center" },
  { label: "Logs", width: "w-[100px] justify-center" },
];

function Results() {
  return (
    <div className="flex h-[628px] w-[1446px] flex-col">
      <div className="flex h-[48px] gap-[10px]">
        <div className="relative z-10 flex h-[50px] w-[100px] items-center justify-center rounded-t-[6px] border-x-2 border-t-2 border-[#6a6a6a] bg-[#525252] text-white">
          Equity
        </div>
        {TABS.map((t) => (
          <div key={t.label} className={`flex h-[48px] items-center whitespace-nowrap rounded-t-[6px] bg-[#3a3a3a] pt-[2px] text-[#c8c8c8] ${t.width}`}>
            {t.label}
            {t.badge && (
              <span className={`mb-[4px] ml-auto flex h-[30px] items-center justify-center rounded-[6px] pt-[2px] text-white ${t.tone}`}>{t.badge}</span>
            )}
          </div>
        ))}
      </div>
      <div className="h-[580px] rounded-b-[6px] rounded-tr-[6px] border-2 border-[#6a6a6a] bg-[#525252] p-[10px]">
        <EquityChart />
      </div>
    </div>
  );
}

function DateBox({ value }: { value: string }) {
  return (
    <div className="flex h-[38px] w-[203px] items-center rounded-[6px] bg-[#282828] pl-[10px] pr-[11px] pt-px text-white">
      {value}
      <Down className="mb-[6px] ml-auto text-[#8a8a8a]" />
    </div>
  );
}

function Backtesting() {
  return (
    <div className="flex h-[889px] w-[1886px] flex-col rounded-b-[6px] rounded-tr-[6px] bg-[#525252] px-[12px] pt-[12px]">
      <div className="flex h-[38px] items-center">
        <div className="flex h-[38px] w-[58px] items-center justify-center rounded-[6px] bg-[#282828]">
          <svg width="26" height="26" viewBox="-13 -13 26 26" fill="#c4c4c4">
            {[0, 45, 90, 135, 180, 225, 270, 315].map((a) => (
              <path key={a} transform={`rotate(${a})`} d="M-3.6 -7 L-1 -13 H1 L3.6 -7 Z" />
            ))}
            <circle r="6.9" fill="none" stroke="#c4c4c4" strokeWidth="2.8" />
          </svg>
        </div>
        <div className="ml-[10px]">
          <DateBox value="06/04/2023" />
        </div>
        <div className="ml-[10px] flex h-[22px] w-[1161px] items-center">
          <div className="z-10 size-[22px] shrink-0 rounded-full bg-[#bcbcbc] shadow-[0_2px_3px_rgba(0,0,0,0.45)]" />
          <div className="-mx-[8px] h-[14px] flex-1 bg-[#5f5f5f]" />
          <div className="z-10 size-[22px] shrink-0 rounded-full bg-[#bcbcbc] shadow-[0_2px_3px_rgba(0,0,0,0.45)]" />
        </div>
        <div className="ml-[13px]">
          <DateBox value="30/06/2025" />
        </div>
        <div className="ml-[10px] flex h-[38px] w-[58px] items-center justify-center rounded-[6px] bg-[#282828]">
          <svg width="14" height="18" viewBox="0 0 14 18">
            <path d="M0 0 L14 9 L0 18 Z" fill="#c4c4c4" />
          </svg>
        </div>
        <div className="ml-[10px] flex h-[38px] w-[58px] items-center justify-center rounded-[6px] bg-[#3d3d3d]">
          <div className="size-[14px] bg-[#808080]" />
        </div>
        <div className="ml-[10px] flex h-[38px] w-[58px] items-center justify-center rounded-[6px] bg-[#282828] text-[#c4c4c4]">
          <SaveIcon />
        </div>
      </div>
      <div className="mt-[25px] flex h-[28px] items-center text-[#808080]">
        <div className="size-[28px] rounded-[5px] bg-[#282828]" />
        <span className="ml-[6px] w-[150px] pt-px tracking-[0.08px] text-white">Visual Mode</span>
        <div className="h-[2px] w-[935px] bg-[#606060]" />
        <div className="size-[22px] rounded-full bg-[#8a8a8a] shadow-[0_2px_3px_rgba(0,0,0,0.3)]" />
        <span className="ml-[10px] w-[240px] whitespace-nowrap pt-px">01/07/2025 01:59:56</span>
        <span className="w-[91px] pt-px">Speed:</span>
        <div className="h-[2px] w-[73px] bg-[repeating-linear-gradient(90deg,#5d5d5d_0_6px,#525252_6px_8px)]" />
        <div className="size-[22px] rounded-full bg-[#8a8a8a] shadow-[0_2px_3px_rgba(0,0,0,0.3)]" />
        <div className="h-[2px] w-[122px] bg-[repeating-linear-gradient(90deg,#404040_0_6px,#525252_6px_8px)]" />
        <span className="ml-[32px] text-[#a0a0a0]">100x</span>
        <Stepper className="ml-auto mr-[9px] text-[#646464]" />
      </div>
      <div className="relative mt-[21px] h-[727px] w-[1862px] overflow-hidden rounded-[6px]">
        <PriceChart />
        <div className="absolute left-[783px] top-[10px] flex h-[37px] w-[264px] items-center justify-center whitespace-nowrap rounded-[6px] bg-[#262626]/80 text-[22.6px] font-bold tracking-[0.25px] text-[#8c8c8c]">
          -11 423.58 CAD (-11%)
        </div>
      </div>
      <div className="-mx-[2px] flex h-[34px] items-center text-[#808080]">
        <svg width="12" height="14" viewBox="0 0 12 14">
          <path d="M12 0 V14 L0 7 Z" fill="currentColor" />
        </svg>
        <div className="ml-auto size-[16px] rounded-full bg-[#808080]" />
        <svg className="ml-[4px]" width="12" height="14" viewBox="0 0 12 14">
          <path d="M0 0 V14 L12 7 Z" fill="currentColor" />
        </svg>
      </div>
    </div>
  );
}

export default function App() {
  return (
    <div className="h-[1624px] w-[1975px] overflow-hidden bg-[#282828] font-['Liberation_Sans',Arial,sans-serif] text-[21.6px] leading-[26px]">
      <div className="flex h-[951px] gap-[10px] pl-[9px] pt-[4px]">
        <div className="w-[1886px]">
          <div className="flex h-[48px] gap-[10px] text-white">
            <div className="flex h-[48px] w-[220px] items-center rounded-t-[6px] bg-[#3a3a3a] pt-[2px]">
              <div className="ml-[22px] size-[10px] rounded-full bg-[#808080]" />
              <span className="ml-[20px] tracking-[0.15px]">NZDCAD</span>
              <div className="ml-[10px] h-[26px] w-[4px] bg-[#525252]" />
              <span className="ml-[10px]">m1</span>
            </div>
            <div className="flex h-[48px] w-[155px] items-center justify-center rounded-t-[6px] bg-[#525252] pt-[4px]">Backtesting</div>
            <div className="flex h-[48px] w-[165px] items-center justify-center rounded-t-[6px] bg-[#3a3a3a] pt-[2px]">Optimisation</div>
          </div>
          <Backtesting />
        </div>
        <Toolbar />
      </div>
      <div className="flex gap-[10px] pl-[9px]">
        <Parameters />
        <Results />
      </div>
      <div className="flex h-[45px] items-center pl-[9px] pr-[10px] text-white">
        <div className="size-[10px] rounded-full bg-[#555555]" />
        <span className="ml-[10px] tracking-[-0.06px]">Trading session: Wellington</span>
        <span className="ml-auto tracking-[-0.1px]">Current time:</span>
        <span className="ml-[10px] text-[#787878]">02/07/2025 22:56:19</span>
        <span className="ml-[19px] text-[#787878]">UTC+2</span>
        <Down className="ml-[20px] text-[#787878]" />
        <span className="ml-[21px]">|</span>
        <span className="ml-[10px]">25 ms / 25 ms</span>
      </div>
    </div>
  );
}
